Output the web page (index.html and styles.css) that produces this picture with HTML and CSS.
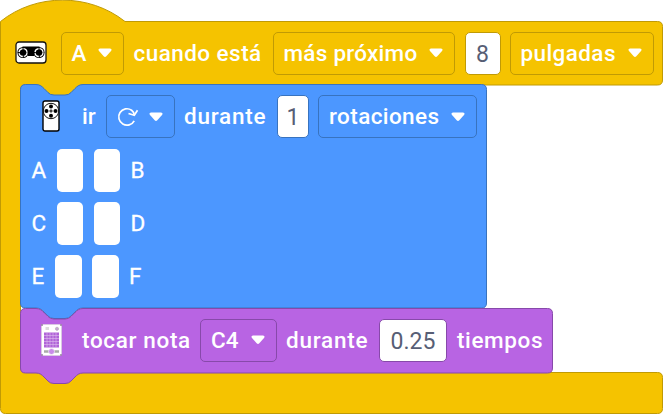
FILE: index.html
```html
<!DOCTYPE html>
<html lang="es">
<head>
<meta charset="utf-8">
<title>Bloques</title>
<link rel="stylesheet" href="styles.css">
</head>
<body>
<svg width="0" height="0" class="defs">
  <symbol id="caret" viewBox="0 0 14 10"><path d="M2 .5H12Q14.5 1 13 3L8.3 8.3Q7 9.5 5.7 8.3L1 3Q-.5 1 2 .5Z" fill="#fff"/></symbol>
</svg>
<main class="event">
  <svg class="shape" width="663" height="414" viewBox="0 0 663 414">
    <path fill="#f5c300" stroke="#c09a04" d="M.5 21.5C36-7 89-7 125 21.5H657.5Q662.5 21.5 662.5 26.5V80Q662.5 85 657.5 85H83C79 85 77 87 75 89L71 93Q69 95.500 65 95.500H54Q50 95.500 48 93L44 89C42 87 40 85 36 85H25.500Q20.500 85 20.500 90V367.500Q20.500 372.500 25.500 372.500H657.500Q662.500 372.500 662.500 377.500V408.500Q662.500 413.500 657.500 413.500H5.500Q.5 413.500 .5 408.500Z"/>
  </svg>
  <div class="row head">
    <svg class="i-distance" width="32" height="23" viewBox="0 0 32 23">
      <rect x="1" y="1" width="30" height="21" rx="3" fill="#fff" stroke="#111" stroke-width="1.300"/>
      <path d="M7.500 5.500H24.500V12H20L19 15H13L12 12H7.500Z" fill="#000"/>
      <circle cx="8" cy="11.500" r="5.600"/><circle cx="24" cy="11.500" r="5.600"/>
      <g fill="none" stroke="#fff" stroke-width="1.300" stroke-dasharray="5.300 1"><circle cx="8" cy="11.500" r="4"/><circle cx="24" cy="11.500" r="4"/></g>
    </svg>
    <span class="field port"><b class="t-a">A</b><svg class="caret"><use href="#caret"/></svg></span>
    <b class="t-when">cuando está</b>
    <span class="field near"><b class="t-near">más próximo</b><svg class="caret"><use href="#caret"/></svg></span>
    <span class="input eight">8</span>
    <span class="field inches"><b class="t-inches">pulgadas</b><svg class="caret"><use href="#caret"/></svg></span>
  </div>
  <section class="motor">
    <svg class="shape" width="467" height="235" viewBox="0 0 467 235">
      <path fill="#4c97ff" stroke="#3873bf" d="M.5 5.500Q.5 .5 5.500 .5H16C20 .5 22 2.500 24 4.500L28 8.500Q30 11 34 11H45Q49 11 51 8.500L55 4.500C57 2.500 59 .5 63 .5H461.500Q466.500 .5 466.500 5.500V219Q466.500 224 461.500 224H63C59 224 57 226 55 228L51 232Q49 234.500 45 234.500H34Q30 234.500 28 232L24 228C22 226 20 224 16 224H5.500Q.5 224 .5 219Z"/>
    </svg>
    <div class="row">
      <svg class="i-motor" width="18" height="32" viewBox="0 0 18 32">
        <rect x="1" y="1" width="16" height="30" rx="2" fill="#fff" stroke="#000" stroke-width="1.400"/>
        <circle cx="9" cy="11" r="7.700" fill="#fff" stroke="#111"/>
        <circle cx="9" cy="6.500" r="2"/><circle cx="9" cy="15.700" r="2"/><circle cx="4.500" cy="11" r="2"/><circle cx="13.500" cy="11" r="2"/>
        <path d="M9 9.300V12.700M7.300 11H10.700" stroke="#000"/>
      </svg>
      <b class="t-go">ir</b>
      <span class="field turn"><svg class="i-turn" width="22" height="22" viewBox="0 0 22 22" fill="none" stroke="#fff" stroke-width="1.700"><path d="M17.200 14.800A8.200 8.200 0 1 1 14.600 4.200Q17 6 17.300 9"/><path d="M11.500 7.500L17.300 9.300L20.500 4.200"/></svg><svg class="caret"><use href="#caret"/></svg></span>
      <b class="t-during">durante</b>
      <span class="input one">1</span>
      <span class="field rotations"><b class="t-rotations">rotaciones</b><svg class="caret"><use href="#caret"/></svg></span>
    </div>
    <div class="pair"><span>A</span><i></i><i></i><span>B</span></div>
    <div class="pair"><span>C</span><i></i><i></i><span>D</span></div>
    <div class="pair narrow"><span>E</span><i></i><i></i><span>F</span></div>
  </section>
  <section class="sound">
    <svg class="shape" width="533" height="76" viewBox="0 0 533 76">
      <path fill="#b864e3" stroke="#8749aa" d="M.5 5.500Q.5 .5 5.500 .5H16C20 .5 22 2.500 24 4.500L28 8.500Q30 11 34 11H45Q49 11 51 8.500L55 4.500C57 2.500 59 .5 63 .5H527.500Q532.500 .5 532.500 5.500V60Q532.500 65 527.500 65H83L63 65C59 65 57 67 55 69L51 73Q49 75.500 45 75.500H34Q30 75.500 28 73L24 69C22 67 20 65 16 65H5.500Q.5 65 .5 60Z"/>
    </svg>
    <div class="row">
      <svg class="i-hub" width="21" height="32" viewBox="0 0 21 32">
        <rect x=".5" y=".5" width="20" height="31" rx="1" fill="#fff" stroke="#d9c8e2"/>
        <path d="M0 1H2M19 1H21M0 31H2M19 31H21" stroke="#987fa6" stroke-width="1.500"/>
        <rect x="4.500" y="3" width="3.500" height="3" fill="#ddd"/><circle cx="16" cy="4.800" r="1.600" fill="#c8a6da" stroke="#aaa" stroke-width=".6"/>
        <rect x="3" y="8.500" width="15" height="15" fill="#b064d8"/>
        <path d="M6 8.500V23.500M9 8.500V23.500M12 8.500V23.500M15 8.500V23.500M3 11.500H18M3 14.500H18M3 17.500H18M3 20.500H18" stroke="#dfbdf0" stroke-width=".6"/>
        <path d="M3 27.500H18" stroke="#aaa" stroke-width="2.500"/><circle cx="10.500" cy="27.500" r="3" fill="#c98ce9" stroke="#fff" stroke-width=".6"/>
      </svg>
      <b class="t-play">tocar nota</b>
      <span class="field note"><b class="t-note">C4</b><svg class="caret"><use href="#caret"/></svg></span>
      <b class="t-during">durante</b>
      <span class="input beats">0.25</span>
      <b class="t-beats">tiempos</b>
    </div>
  </section>
</main>
</body>
</html>
```
FILE: styles.css
```css
* { box-sizing: border-box; }
body { margin: 0; background: #fff; overflow: hidden; }
.defs { position: absolute; }
.event {
  position: relative;
  width: 663px;
  height: 414px;
  padding-top: 31.5px;
  color: #fff;
  font: 500 22.5px/42px Roboto, sans-serif;
}
.shape { position: absolute; left: 0; top: 0; z-index: -1; overflow: visible; }
.event, .motor, .sound { isolation: isolate; }
.row { display: flex; align-items: center; height: 43px; white-space: nowrap; }
b { display: block; flex: none; padding-bottom: 1px; font-weight: 500; }
.row svg { flex: none; }
.row > svg { margin-bottom: 1px; }
.head { padding-left: 14.5px; }
.field {
  display: flex;
  align-items: center;
  flex: none;
  height: 43px;
  padding: 0 11px 0 10px;
  border: 1px solid #c09a04;
  border-radius: 5px;
}
.caret { width: 14px; height: 10px; margin-left: auto; }
.input {
  flex: none;
  height: 43px;
  border: 1px solid #c09a04;
  border-radius: 5px;
  background: #fff;
  color: #575e75;
  font-weight: 400;
  font-size: 23px;
  line-height: 43px;
  text-align: center;
}
.port { width: 63px; margin: 0 10px 0 14px; }
.t-when { width: 128px; margin-right: 11px; letter-spacing: .45px; }
.near { width: 182px; margin-right: 10px; }
.t-near { letter-spacing: .25px; }
.eight { width: 36px; margin-right: 9px; }
.inches { width: 144px; }
.t-inches { letter-spacing: .4px; }

.motor { position: relative; width: 467px; height: 224px; margin: 9.500px 0 0 20px; padding-top: 11px; }
.motor .row { padding-left: 22px; margin-bottom: 11px; }
.motor .field, .motor .input { border-color: #3873bf; }
.t-go { width: 14px; margin: 0 10px 0 22px; }
.turn { width: 69px; margin-right: 9px; }
.t-during { width: 83px; margin-right: 10px; letter-spacing: .75px; }
.one { width: 32px; margin-right: 9px; }
.rotations { width: 159px; }
.t-rotations { letter-spacing: .4px; }
.pair { display: flex; align-items: center; height: 43px; margin-bottom: 10px; padding-left: 11.500px; font-weight: 400; -webkit-text-stroke: .3px #fff; }
.pair span { width: 15px; padding-bottom: 2px; }
.pair i { width: 26.500px; height: 43px; margin-left: 10.300px; border-radius: 5px; background: #fff; }
.pair i + span { margin-left: 10.500px; }
.narrow span:first-child { width: 13.500px; }

.sound { position: relative; width: 533px; height: 64px; margin-left: 20px; padding-top: 10.500px; }
.sound .row { padding-left: 21px; }
.sound .field, .sound .input { border-color: #8749aa; }
.t-play { width: 109px; margin: 0 9px 0 20px; letter-spacing: .65px; }
.note { width: 77px; margin-right: 9px; }
.beats { width: 68px; margin-right: 10px; }
.t-beats { letter-spacing: .6px; }
```
